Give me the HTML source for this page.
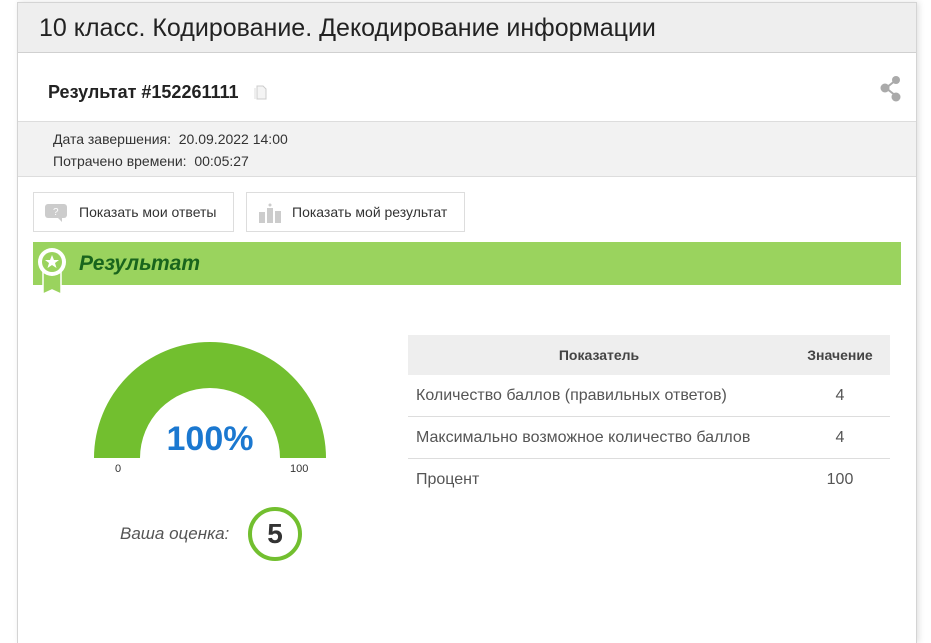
<!DOCTYPE html>
<html><head><meta charset="utf-8"><style>
body{margin:0;background:#fff;font-family:"Liberation Sans",sans-serif;width:931px;height:627px;overflow:hidden;position:relative}
.card{position:absolute;left:17px;top:2px;width:898px;height:640px;border:1px solid #d4d4d4;border-bottom:none;box-shadow:2px 0 6px rgba(0,0,0,.12)}
.hdr{height:49px;background:#eee;border-bottom:1px solid #d0d0d0;font-size:25px;color:#222;padding-left:21px;line-height:50px}
.res{height:68px;border-bottom:1px solid #ddd;position:relative}
.info{height:54px;background:#f2f2f2;border-bottom:1px solid #ddd;font-size:14px;color:#333;padding-left:35px}
.btn{position:absolute;top:192px;height:38px;border:1px solid #ddd;font-size:14px;color:#333;line-height:39px;background:#fff}
.band{position:absolute;left:33px;top:242px;width:868px;height:43px;background:#9ad35e}
table{position:absolute;left:408px;top:335px;width:482px;border-collapse:collapse;font-size:16px;color:#555}
th{background:#eee;height:40px;padding:0;font-size:14px;color:#444}
td{height:41px;padding:0 0 0 8px;border-bottom:1px solid #ddd}
</style></head><body>
<div class="card">
<div class="hdr">10 класс. Кодирование. Декодирование информации</div>
<div class="res">
<div style="position:absolute;left:30px;top:29px;font-weight:bold;font-size:18px;color:#222">Результат #152261111</div>
<svg style="position:absolute;left:236px;top:32px" width="14" height="16"><path d="M3 1h6l3 3v10H3z" fill="#f4f4f4" stroke="#ccc"/><path d="M1 3v11" stroke="#ddd"/></svg>
<svg style="position:absolute;left:860px;top:22px" width="26" height="30" viewBox="0 0 26 30"><path d="M18 5L8 13L18 21" stroke="#aaa" stroke-width="2" fill="none"/><circle cx="18" cy="5" r="4" fill="#aaa"/><circle cx="7" cy="13" r="4.5" fill="#aaa"/><circle cx="18" cy="22" r="4.5" fill="#aaa"/></svg>
</div>
<div class="info"><div style="padding-top:9px">Дата завершения:&nbsp; 20.09.2022 14:00</div><div style="padding-top:6px">Потрачено времени:&nbsp; 00:05:27</div></div>
</div>
<div class="btn" style="left:33px;width:199px"><svg style="position:absolute;left:10px;top:10px" width="24" height="20"><rect x="1" y="1" width="22" height="14" rx="3" fill="#ccc"/><path d="M14 15l4 4v-4z" fill="#ccc"/><text x="9" y="12" font-size="10" fill="#fff" font-family="Liberation Sans">?</text></svg><span style="position:absolute;left:45px">Показать мои ответы</span></div>
<div class="btn" style="left:246px;width:217px"><svg style="position:absolute;left:11px;top:10px" width="24" height="20"><rect x="1" y="9" width="6" height="11" fill="#ccc"/><rect x="9" y="5" width="6" height="15" fill="#ccc"/><rect x="17" y="8" width="6" height="12" fill="#ccc"/><circle cx="12" cy="2" r="1.5" fill="#ccc"/></svg><span style="position:absolute;left:45px">Показать мой результат</span></div>
<div class="band">
<svg style="position:absolute;left:4px;top:4px;overflow:visible" width="30" height="50"><path d="M6 22v26l9-4 9 4V22z" fill="#9ad35e" stroke="#fff" stroke-width="1.5"/><circle cx="15" cy="16" r="14" fill="#fff"/><circle cx="15" cy="16" r="10" fill="#9ad35e"/><path d="M15 9l2 5h5l-4 3 1.5 5-4.5-3-4.5 3 1.5-5-4-3h5z" fill="#fff"/></svg>
<div style="position:absolute;left:46px;top:10px;font-size:21px;font-weight:bold;font-style:italic;color:#19651d">Результат</div>
</div>
<svg style="position:absolute;left:90px;top:338px" width="240" height="125"><path d="M4 120A116 116 0 0 1 236 120H190A70 70 0 0 0 50 120Z" fill="#72bf2f"/></svg>
<div style="position:absolute;left:140px;top:420px;width:140px;text-align:center;font-size:34px;font-weight:bold;color:#1b78d0">100%</div>
<div style="position:absolute;left:115px;top:463px;font-size:11px;color:#333">0</div>
<div style="position:absolute;left:290px;top:463px;font-size:11px;color:#333">100</div>
<div style="position:absolute;left:120px;top:524px;font-size:17px;font-style:italic;color:#555">Ваша оценка:</div>
<div style="position:absolute;left:248px;top:507px;width:46px;height:46px;border:4px solid #72bf2f;border-radius:50%;text-align:center;line-height:46px;font-size:28px;font-weight:bold;color:#333">5</div>
<table>
<tr><th>Показатель</th><th style="width:100px">Значение</th></tr>
<tr><td>Количество баллов (правильных ответов)</td><td style="text-align:center;padding:0">4</td></tr>
<tr><td>Максимально возможное количество баллов</td><td style="text-align:center;padding:0">4</td></tr>
<tr><td style="border:none">Процент</td><td style="text-align:center;padding:0;border:none">100</td></tr>
</table>
</body></html>
